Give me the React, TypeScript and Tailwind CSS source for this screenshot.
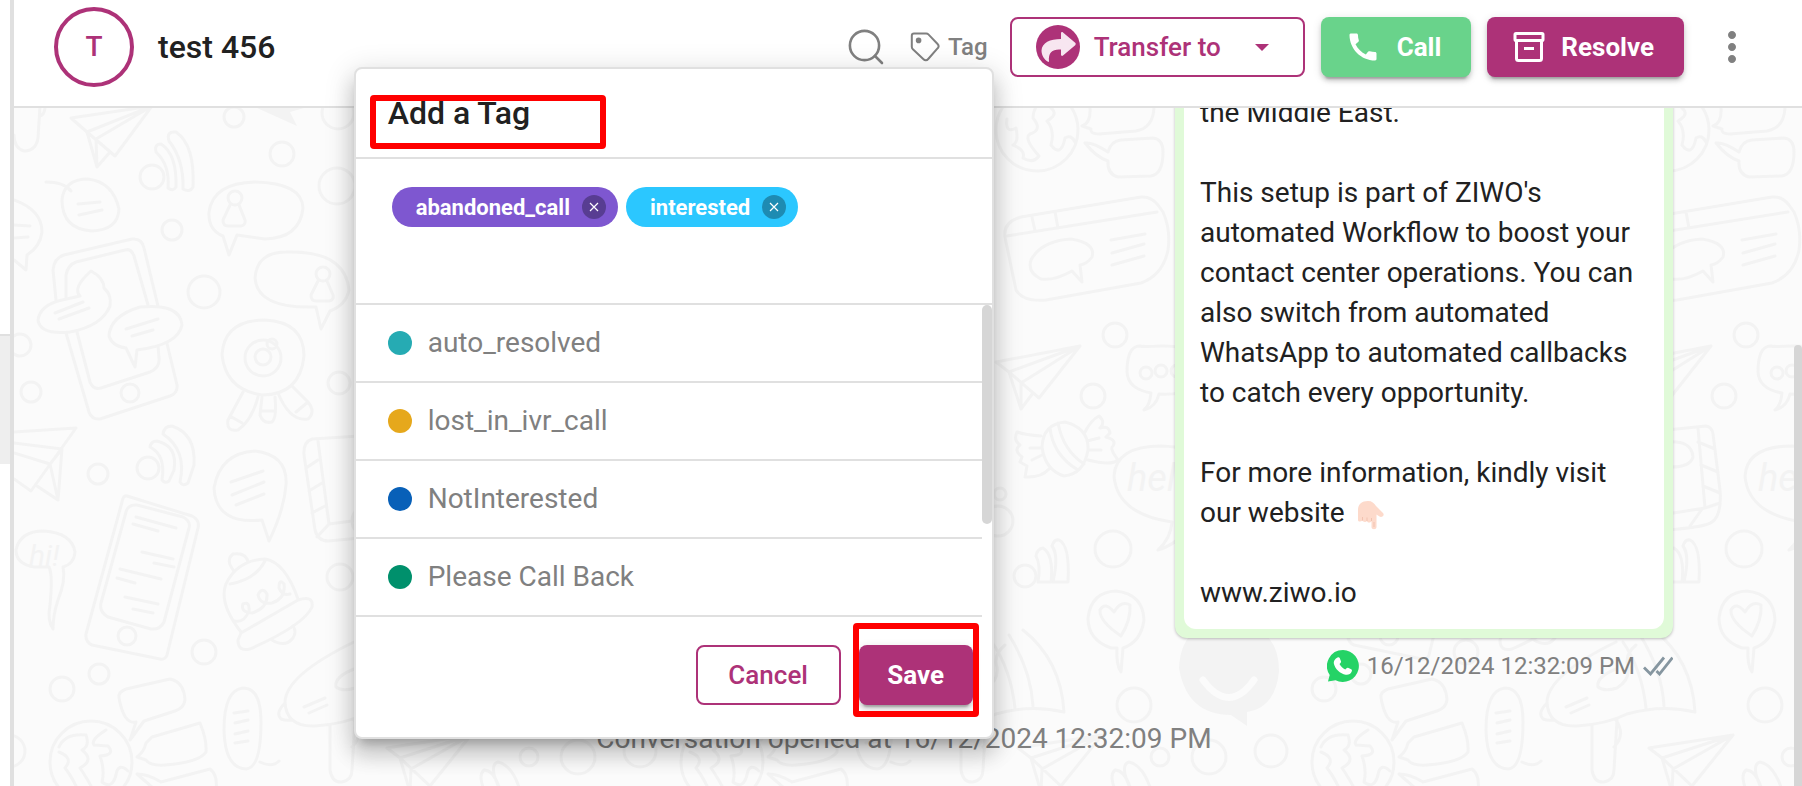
import React from "react";
import { MdCall, MdMoreVert } from "react-icons/md";

const selectedTags = [
  { id: 1, name: "abandoned_call", className: "bg-[#7e57d0]", close: "bg-[#583d92]" },
  { id: 2, name: "interested", className: "bg-[#2bc7ff]", close: "bg-[#1e8bb2]" },
];

const availableTags = [
  { id: 1, name: "auto_resolved", dot: "bg-[#26abb3]" },
  { id: 2, name: "lost_in_ivr_call", dot: "bg-[#e6a81c]" },
  { id: 3, name: "NotInterested", dot: "bg-[#0860b8]" },
  { id: 4, name: "Please Call Back", dot: "bg-[#00906c]" },
];

const raised =
  "shadow-[0_6px_2px_-4px_rgba(0,0,0,0.2),0_4px_4px_rgba(0,0,0,0.14),0_2px_10px_rgba(0,0,0,0.12)]";

const circles = [
  [234, 117, 10], [338, 113, 16], [282, 154, 12], [152, 177, 12], [172, 230, 10],
  [204, 292, 16], [337, 186, 18], [20, 345, 11], [31, 392, 10], [98, 474, 10],
  [148, 468, 11], [339, 383, 11], [340, 577, 13], [204, 652, 12], [99, 674, 10],
  [62, 689, 12], [9, 751, 16], [484, 335, 12], [462, 396, 12], [369, 494, 6],
  [367, 521, 15], [482, 549, 18], [394, 576, 11], [503, 705, 17], [578, 757, 17],
  [529, 757, 9],
];

const Doodles = () => {
  return (
    <svg className="absolute inset-0 h-full w-full" aria-hidden="true">
      <defs>
        <g
          id="doodle-tile"
          fill="none"
          stroke="#f3f3f3"
          strokeWidth="3"
          strokeLinecap="round"
          strokeLinejoin="round"
        >
          {circles.map(([cx, cy, r]) => (
            <circle key={`${cx}-${cy}`} cx={cx} cy={cy} r={r} />
          ))}

          {/* Paper planes */}
          <path d="M71 118L152 106L115 156L87 132ZM87 132L97 167L96 139L152 106M87 132L152 106M97 167L110 152" />
          <path d="M14 432L76 428L31 491L14 479M14 443L62 449L50 464L14 453M62 449L58 500L37 486M50 464L58 500" />
          <path d="M365 362L449 346L408 398L378 372ZM378 372L390 409L390 383L449 346M378 372L449 346M390 409L402 393" />
          <path d="M387 748L471 735L430 786L400 758ZM400 758L410 792L411 769L471 735M400 758L471 735" />

          {/* Signal waves */}
          <path d="M176 132Q195 145 193 187Q190 193 183 189Q184 160 169 141Q166 131 176 132Z" />
          <path d="M161 144Q177 154 176 187Q173 192 168 188Q170 165 156 152Q154 144 161 144Z" />
          <path d="M172 426Q196 434 194 465L188 483Q183 487 180 482Q187 450 163 434Q164 426 172 426Z" />
          <path d="M157 441Q178 446 174 470L169 481Q165 484 162 480Q166 455 150 447Q151 441 157 441Z" />
          <path d="M428 540Q439 545 437 582L422 582Q428 555 421 546Q423 539 428 540Z" />
          <path d="M412 548Q423 555 420 582H407Q410 565 405 556Q406 549 412 548Z" />
          <path d="M498 762Q512 765 520 790M498 762Q488 765 500 790M484 770Q494 770 500 790M484 770Q478 775 484 790" />

          {/* Chat bubbles */}
          <path d="M46 182Q64 182 71 191M62 200Q64 179 88 179Q113 182 119 209Q118 230 92 231Q62 229 62 200Z" />
          <path d="M78 204L100 202M79 215L102 210" />
          <path d="M14 200Q42 210 42 232Q40 247 27 255L26 270L14 260M14 225L30 226M14 238L28 237" />
          <path d="M223 236Q208 230 209 212Q213 183 255 182Q302 183 303 208Q300 238 265 239L237 235L229 255Z" />
          <path d="M316 307Q257 309 255 278Q257 252 286 252Q345 250 349 290Q346 305 330 311L321 329Z" />
          <circle cx="235" cy="198" r="7" />
          <circle cx="323" cy="274" r="7" />
          <path d="M230 205L223 220Q223 226 228 226H241Q246 225 245 220L239 205M318 281L311 295Q311 301 316 301H329Q334 300 333 295L327 281" />
          <path d="M262 520Q216 525 214 488Q220 453 255 451Q288 455 286 485Q284 510 269 541Z" />
          <path d="M231 482L263 471M232 495L264 482M236 505L264 494" />
          <path d="M34 567Q16 564 16 550Q20 531 44 531Q72 533 75 552Q74 564 63 567Q66 580 58 600Q53 615 53 629Q47 620 50 605Q53 575 49 567Z" />
          <path d="M119 698Q118 692 126 689L170 679Q184 682 185 700Q184 708 175 711L144 721L130 740L136 722Q124 725 119 698Z" />
          <path d="M137 757Q144 752 146 743L152 737L200 723Q207 740 206 752Q200 762 165 765Q150 766 146 760Z" />
          <path d="M137 774Q148 774 161 782L210 769Q218 775 216 790M137 774L160 794" />
          <path d="M523 108Q522 128 505 131L468 134Q459 134 460 129L451 126Q460 123 459 108" />
          <path d="M454 143Q462 142 477 152Q480 141 490 140L522 138Q532 139 532 152Q532 174 520 176L487 177Q476 174 477 161Q465 157 454 143Z" />
          <path d="M508 346Q496 347 496 372Q497 389 520 393Q519 405 513 410Q525 407 528 394Q572 396 573 370Q570 345 530 346Q512 347 508 346Z" />
          <circle cx="515" cy="373" r="6" />
          <circle cx="530" cy="371" r="6" />
          <circle cx="546" cy="371" r="6" />
          <path d="M541 522Q486 514 483 476Q485 446 530 446Q588 448 590 484Q588 510 560 522Q550 543 527 550Q540 538 541 522Z" />
          <path d="M480 648Q457 640 457 618Q460 592 485 591Q512 594 513 620Q510 642 492 648L490 672Q485 665 486 648Z" />
          <path d="M490 636Q468 621 469 610Q474 601 483 612Q490 600 499 605Q500 620 490 636Z" />

          {/* Phones */}
          <path d="M59 330L53 270Q54 258 64 255L132 239Q142 238 144 248L177 385Q178 393 170 396L100 419Q92 420 89 412L66 333" />
          <path d="M66 300L66 275Q68 265 76 262L125 250Q131 248 134 256L148 305M77 332L90 382Q93 390 101 388L150 372Q160 368 159 358L158 346" />
          <path d="M127 496L192 516Q200 520 198 528L167 655Q165 660 160 659L92 645Q85 642 86 634L122 502Q123 495 127 496Z" />
          <path d="M137 505L183 517Q191 521 189 528L164 622Q160 630 151 629L108 617Q99 612 101 603L126 512Q128 504 137 505Z" />
          <path d="M136 517L176 528M133 524L158 531M142 552L173 559M154 563L174 567M120 569L161 579M117 578L135 583M125 597L158 604M133 609L153 613" />
          <circle cx="130" cy="393" r="9" />
          <circle cx="127" cy="636" r="9" />
          <g fill="#fbfbfb">
            <path d="M38 320Q40 305 62 300L80 296Q72 288 91 271Q104 278 104 288Q112 295 110 306Q102 326 70 332Q40 335 38 320Z" />
            <path d="M109 336Q110 316 140 307Q180 303 182 325Q178 345 137 350L135 367L126 348Q112 346 109 336Z" />
          </g>
          <path d="M55 313L83 302M59 319L89 308M126 329L158 319M132 336L153 330" />

          {/* Webcam */}
          <path d="M222 355Q224 320 265 320Q304 322 304 356Q300 395 262 395Q226 390 222 355Z" />
          <circle cx="263" cy="358" r="18" />
          <circle cx="263" cy="357" r="8" />
          <circle cx="272" cy="344" r="5" />
          <path d="M243 392L228 420Q226 432 238 430Q252 420 258 397M262 397L260 415Q263 424 272 422Q277 418 275 397M278 393Q290 422 308 419Q316 412 308 402L292 386M230 416L242 423M261 411H275M296 412L308 402" />

          {/* Bell */}
          <path d="M241 632Q216 600 228 580Q240 560 265 559Q285 562 298 599M234 571Q225 560 233 554Q246 552 248 562M230 584Q255 580 265 561" />
          <path d="M241 633L298 600Q314 595 312 607Q304 625 250 649Q238 652 238 640Z" />
          <path d="M235 621Q244 623 249 611Q250 601 243 604Q240 612 252 613Q268 608 267 594Q262 586 258 595Q260 605 272 603Q286 598 284 584Q279 578 279 588Q282 596 290 594M272 640Q285 648 293 638Q297 632 293 626" />

          {/* Pill */}
          <path d="M243 688Q261 688 261 722Q261 768 246 769Q225 768 224 730Q224 690 243 688ZM234 713L248 711M235 723L248 720M235 734L248 731M235 743L248 741M260 762Q272 768 279 761" />

          {/* Mushroom */}
          <path d="M354 642Q286 675 285 702Q286 727 315 726Q345 724 365 714Q400 704 433 712Q430 660 392 630M304 707L325 698M309 713L327 705M354 669Q334 677 336 687Q342 692 355 688Q368 680 366 667Q362 655 374 645M285 703Q275 713 281 719Q286 721 292 720M330 725V770Q332 783 342 782Q352 780 352 770L355 720M354 720Q364 735 352 747M361 642Q380 670 384 708M378 635Q400 670 402 706" />

          {/* Globes */}
          <circle cx="91" cy="762" r="41" />
          <circle cx="406" cy="130" r="41" />
          <path d="M59 747Q65 733 86 735Q90 746 82 750Q95 760 80 768Q85 775 91 786M59 752Q74 758 65 768Q70 774 76 786M106 730Q90 740 94 745L108 746Q116 755 100 756Q105 770 102 782Q112 790 116 775Q118 762 128 771" />
          <path d="M376 119Q374 134 385 128Q388 142 382 145Q395 150 392 158Q402 164 408 156Q392 138 399 134Q412 130 402 118Q402 112 405 107M420 108Q428 114 416 121Q424 130 420 145Q430 158 434 138Q440 134 444 142" />

          {/* Card */}
          <path d="M374 237Q372 222 390 217L510 197Q520 196 527 205L532 212Q540 230 537 250Q532 275 510 283L415 300Q392 302 385 290ZM376 236L526 212M401 217L404 231M424 212L427 228M480 240L514 234M481 253L513 244M481 265L513 256" />
          <path d="M441 271Q423 281 410 279Q396 272 400 260Q410 241 440 239Q465 243 461 257Q456 264 449 265L451 282Z" />

          {/* Smiling balloon */}
          <path
            d="M598 620Q649 626 648 672Q644 708 616 712L616 726L600 715Q556 715 548 668Q550 622 598 620Z"
            fill="#f3f3f3"
            stroke="none"
          />
          <path d="M572 680Q598 715 623 680" stroke="#fbfbfb" strokeWidth="7" />
          <path d="M257 108H304L290 112L297 126Z" fill="#f3f3f3" stroke="none" />
          <path d="M40 106L38 138Q36 151 24 151Q14 148 14 135M45 108Q44 115 40 116" />

          <g fill="#f3f3f3" stroke="none" fontFamily="Roboto, sans-serif" fontStyle="italic">
            <text x="29" y="566" fontSize="30">hi!</text>
            <text x="496" y="491" fontSize="38">hello</text>
          </g>
        </g>
      </defs>
      <use href="#doodle-tile" x="-14" y="-108" />
      <use href="#doodle-tile" x="617" y="-108" />
      <use href="#doodle-tile" x="1248" y="-108" />
      <use href="#doodle-tile" x="1879" y="-108" />

      <g fill="none" stroke="#f3f3f3" strokeWidth="3" strokeLinecap="round" strokeLinejoin="round">
        {/* Book, both ends */}
        <path
          transform="translate(-14 -108)"
          d="M360 436L312 439Q303 442 304 455L315 530Q318 541 328 541L360 538M318 441L329 524L360 520M318 460L306 468M322 483L309 491M325 506L312 513M329 524L317 537"
        />
        <path
          transform="translate(1248 -108)"
          d="M405 430L444 426Q450 427 451 434L458 490Q460 515 450 522Q444 527 405 530M436 428L443 508L405 514M436 442L453 449M439 465L456 472M441 486L458 493M443 508L458 503M440 509L428 526M405 442Q430 440 431 457Q428 468 405 467"
        />

        {/* Candy */}
        <path
          transform="translate(617 -108)"
          d="M411 447Q412 424 434 422Q458 428 457 450Q453 474 433 476Q414 470 411 447ZM419 428Q422 455 447 470M427 423Q432 450 453 464M410 436Q395 435 386 432Q382 440 389 445Q382 450 391 457L389 462L396 466L394 477Q410 478 418 469M399 448H410M401 460L411 455M454 432Q460 420 468 416Q475 422 469 428Q478 425 479 433L475 437Q486 440 482 446Q478 448 487 460Q480 466 457 460M456 441L468 438M457 450H470"
        />
      </g>
    </svg>
  );
};

const TagPopover = () => {
  return (
    <div
      role="dialog"
      aria-label="Add a Tag"
      className="absolute -right-[6px] top-[50px] z-20 w-[640px] rounded-lg border-2 border-[#e0e0e0] bg-white shadow-[0_10px_10px_-6px_rgba(0,0,0,0.2),0_16px_20px_2px_rgba(0,0,0,0.14),0_6px_28px_4px_rgba(0,0,0,0.12)]"
    >
      <div className="h-[90px] border-b-2 border-[#e0e0e0] px-8 pt-6">
        <h2 className="text-[32px] font-medium leading-10 text-[#212121]">Add a Tag</h2>
        <div className="absolute left-[14px] top-[26px] h-[54px] w-[236px] rounded border-[6px] border-[#ff0000]" />
      </div>

      <div className="flex h-[146px] items-start gap-2 border-b-2 border-[#e0e0e0] px-9 pt-7">
        {selectedTags.map((tag) => (
          <span
            key={tag.id}
            className={`flex h-10 items-center gap-3 rounded-full pl-6 pr-3 text-[22px] font-bold text-white ${tag.className}`}
          >
            {tag.name}
            <button
              type="button"
              aria-label={`Remove ${tag.name}`}
              className={`flex size-6 items-center justify-center rounded-full ${tag.close}`}
            >
              <svg viewBox="0 0 10 10" className="size-[10px]" stroke="#fff" strokeWidth="1.2">
                <path d="M1 1l8 8M9 1l-8 8" />
              </svg>
            </button>
          </span>
        ))}
      </div>

      <div className="relative">
        <ul className="mr-[10px]">
          {availableTags.map((tag) => (
            <li key={tag.id} className="border-b-2 border-[#e0e0e0]">
              <button
                type="button"
                className="flex h-[76px] w-full items-center gap-4 px-8 text-[28px] text-[#808080]"
              >
                <span className={`size-6 rounded-full ${tag.dot}`} />
                {tag.name}
              </button>
            </li>
          ))}
        </ul>
        <div className="absolute right-0 top-0 h-[219px] w-[10px] rounded-full bg-[#d6d6d6]" />
      </div>

      <div className="flex h-[120px] items-start justify-end gap-[18px] pr-[19px] pt-7">
        <button
          type="button"
          className="h-[60px] w-[145px] rounded-lg border-2 border-[#ad3278] text-[26px] font-medium text-[#ad3278]"
        >
          Cancel
        </button>
        <div className="relative">
          <button
            type="button"
            className={`h-[60px] w-[114px] rounded-lg bg-[#ad3278] text-[26px] font-bold text-white ${raised}`}
          >
            Save
          </button>
          <div className="absolute -inset-x-[6px] -bottom-3 -top-[22px] rounded border-[6px] border-[#ff0000]" />
        </div>
      </div>
    </div>
  );
};

const Header = () => {
  return (
    <header className="relative z-10 flex h-[108px] shrink-0 items-center border-b-2 border-[#e0e0e0] bg-white pb-3 pl-10 pr-[46px]">
      <div className="flex size-20 items-center justify-center rounded-full border-4 border-[#ad3278] text-[28px] font-medium text-[#ad3278]">
        T
      </div>
      <h1 className="ml-6 text-[32px] font-medium text-[#212121]">test 456</h1>

      <div className="ml-auto flex items-center">
        <button type="button" aria-label="Search" className="mr-[26px]">
          <svg viewBox="0 0 36 36" className="size-9" fill="none" stroke="#808080" strokeWidth="2.6">
            <circle cx="16.5" cy="16.5" r="14.6" />
            <path d="M27 27l7 7" strokeLinecap="round" />
          </svg>
        </button>

        <div className="relative mr-[22px] flex h-[60px] items-center">
          <button
            type="button"
            className="flex items-center gap-2 text-[24px] font-medium text-[#808080]"
          >
            <svg viewBox="0 0 30 30" className="size-[30px]" fill="none" stroke="#808080" strokeWidth="2">
              <path
                d="M4 1.5h12.2c.9 0 1.6.3 2.2.9l9.2 9.6c1.3 1.4 1.3 2.9.1 4.2L18.2 27c-1.4 1.6-3.3 1.6-4.7.2L2.9 17.3c-.7-.7-1.1-1.5-1.1-2.5V3.8c0-1.4.8-2.3 2.2-2.3z"
                strokeLinejoin="round"
              />
              <circle cx="8.6" cy="8.4" r="1.8" fill="#808080" />
            </svg>
            Tag
          </button>
          <TagPopover />
        </div>

        <button
          type="button"
          className="mr-4 flex h-[60px] w-[295px] items-center rounded-lg border-2 border-[#ad3278] pl-6 text-[26px] font-medium text-[#ad3278]"
        >
          <svg viewBox="0 0 44 44" className="mr-[14px] size-11">
            <circle cx="22" cy="22" r="22" fill="#ad3278" />
            <path
              d="M25 8.2c0-1.1 1.2-1.6 2-.8l12.200 10.400c.7.700.7 1.700 0 2.400L27 30.600c-.8.800-2 .3-2-.8V24.500C17 23.800 12 27 13 36.200c-.1.800-.9.900-1.400.3C8.500 34.500 5.500 30.500 5.500 25.500 6 17.500 14 14 25 13.900z"
              fill="#f7e6f0"
            />
          </svg>
          Transfer to
          <svg viewBox="0 0 14 7" className="ml-[34px] h-[7px] w-[14px]" fill="#ad3278">
            <path d="M0 0h14L7 7z" />
          </svg>
        </button>

        <button
          type="button"
          className={`mr-4 flex h-[60px] items-center rounded-lg bg-[#69d38b] pl-6 pr-[30px] text-[26px] font-bold text-white ${raised}`}
        >
          <MdCall className="mr-4 size-9" />
          Call
        </button>

        <button
          type="button"
          className={`mr-6 flex h-[60px] items-center rounded-lg bg-[#ad3278] pl-[26px] pr-[30px] text-[26px] font-bold text-white ${raised}`}
        >
          <svg viewBox="0 0 32 30" className="mr-4 h-[30px] w-8" fill="none" stroke="#fff" strokeWidth="3" strokeLinejoin="round">
            <rect x="2" y="1.500" width="28" height="7" rx="1" />
            <path d="M3.500 8.500V26.500Q3.500 28.500 5.500 28.500H26.500Q28.500 28.500 28.500 26.500V8.500M11 16.500H21" />
          </svg>
          Resolve
        </button>

        <button type="button" aria-label="More options" className="text-[#808080]">
          <MdMoreVert className="size-12" />
        </button>
      </div>
    </header>
  );
};

const Conversation = () => {
  return (
    <section className="relative flex min-h-0 flex-1 flex-col justify-end overflow-hidden bg-[#fbfbfb] pr-2">
      <Doodles />

      <div className="relative mr-[121px] flex flex-col items-end">
        <div className="w-[498px] rounded-xl bg-[#e0fad8] px-[9px] pb-[9px] shadow-[0_1px_3px_rgba(0,0,0,0.25)]">
          <div className="rounded-b-xl bg-white p-4 text-[28px] leading-10 text-[#212121]">
            <p>the Middle East.</p>
            <p className="mt-10">
              This setup is part of ZIWO's automated Workflow to boost your contact center
              operations. You can also switch from automated WhatsApp to automated callbacks to
              catch every opportunity.
            </p>
            <p className="mt-10">
              For more information, kindly visit our website{" "}
              <svg viewBox="0 0 28 30" className="ml-1 inline h-[30px] w-7" role="img" aria-label="pointing down">
                <path
                  d="M2 20V10C2 4 6 1 12 1c4 0 6 2 8 5l7 7c2 2-1 5-3.500 3.500L20.500 14.500V27c0 3-5 3-5 0V21c-1 2-4 2-4.500 0-1 1.500-4 1.200-4.500-.5C5 22 2 22 2 20z"
                  fill="#fddacb"
                />
                <path d="M6.500 17v3.500M11 17.500V21M15.500 18v3M18 22v5" stroke="#edbda9" strokeWidth=".8" />
              </svg>
            </p>
            <p className="mt-10">www.ziwo.io</p>
          </div>
        </div>

        <div className="mt-[10px] flex h-9 items-center text-[24px] text-[#808080]">
          <svg viewBox="0 0 32 32" className="mr-2 size-8">
            <path d="M16 0a16 16 0 1 1-7.500 30.200L1 31.500l1.700-6.600A16 16 0 0 1 16 0z" fill="#25d366" />
            <path
              d="M10.500 7.500c1-.6 1.800-.3 2.200.6l1.300 3.100c.3.800-.2 1.500-1.500 2.800 1.500 2.800 3.200 4.300 5.800 5.500 1.200-1.200 1.800-2.100 2.700-1.700l3.200 1.500c1 .5.9 1.200.5 2.200-.9 2.500-3.500 3.700-6 3.200-5.500-1-10.800-6-11.800-11-.5-2.600 1.400-5.200 3.600-6.200z"
              fill="#fff"
            />
          </svg>
          16/12/2024 12:32:09 PM
          <svg viewBox="0 0 30 20" className="ml-2 h-5 w-[30px]" fill="none" stroke="#8696a0" strokeWidth="2.800">
            <path d="M1 11.500l6.500 6.500L21 1.500M13.500 15l3 3L29.500 1.500" />
          </svg>
        </div>
      </div>

      <p className="relative mb-[27px] mt-[35px] text-center text-[28px] leading-10 text-[#808080]">
        Conversation opened at 16/12/2024 12:32:09 PM
      </p>
      <div className="absolute bottom-0 right-0 h-[441px] w-2 rounded-t-full bg-[#d6d6d6]" />
    </section>
  );
};

const App = () => {
  return (
    <div className="flex h-screen overflow-hidden bg-white font-['Roboto',sans-serif]">
      <aside className="w-[14px] shrink-0 border-r-4 border-[#e0e0e0] pt-[334px]">
        <div className="h-[130px] border-t-2 border-[#e0e0e0] bg-[#eeeeee]" />
      </aside>
      <main className="flex min-w-0 flex-1 flex-col">
        <Header />
        <Conversation />
      </main>
    </div>
  );
};

export default App;
